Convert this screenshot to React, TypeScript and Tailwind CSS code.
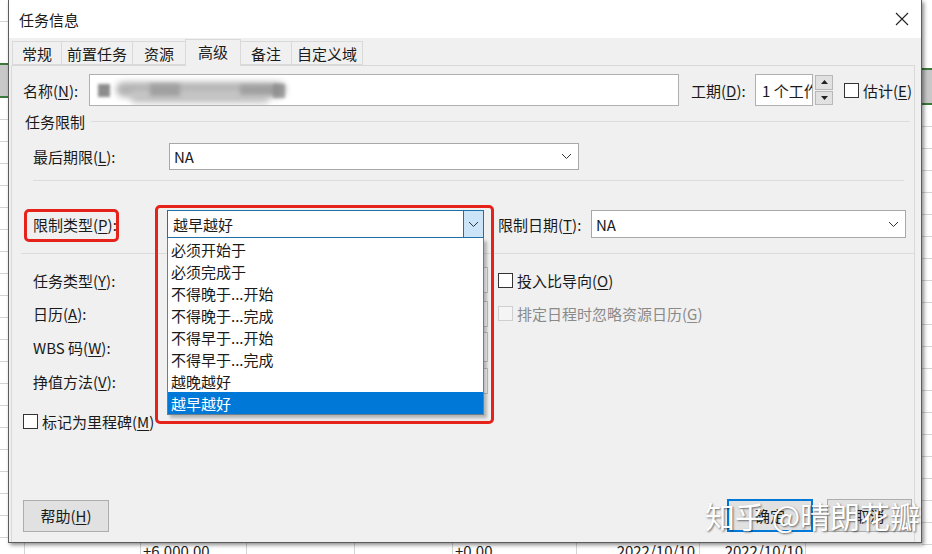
import React from "react";

const FONT = "font-['Microsoft_YaHei','Noto_Sans_CJK_SC','Noto_Sans',sans-serif]";

const TABS = [
  { label: "常规", w: "w-[50px]" },
  { label: "前置任务", w: "w-[72px]" },
  { label: "资源", w: "w-[54px]" },
  { label: "高级", w: "w-[56px]", active: true },
  { label: "备注", w: "w-[52px]" },
  { label: "自定义域", w: "w-[72px]" },
];

const OPTIONS = [
  "必须开始于",
  "必须完成于",
  "不得晚于...开始",
  "不得晚于...完成",
  "不得早于...开始",
  "不得早于...完成",
  "越晚越好",
  "越早越好",
];

function Key({ k }: { k: string }) {
  return <u className="underline underline-offset-[2px] decoration-[1px]">{k}</u>;
}

function Label({ text, k, after = "):" }: { text: string; k: string; after?: string }) {
  return (
    <span className="whitespace-nowrap">
      {text}(<Key k={k} />
      {after}
    </span>
  );
}

function Chevron() {
  return (
    <svg width="11" height="7" viewBox="0 0 11 7" fill="none">
      <path d="M1 1l4.5 4.5L10 1" stroke="#333" strokeWidth="1" />
    </svg>
  );
}

function Check({ disabled }: { disabled?: boolean }) {
  return (
    <div
      className={
        "w-[15px] h-[15px] shrink-0 " +
        (disabled ? "border border-[#cfcfcf] bg-[#f4f4f4]" : "border border-[#333] bg-white")
      }
    />
  );
}

function Select({ value, w }: { value?: string; w: string }) {
  return (
    <div className={`${w} h-[27px] bg-white border border-[#a8a8a8] flex items-center pl-[4px] pr-[6px]`}>
      <span className="flex-1 text-[15px] leading-none">{value}</span>
      <Chevron />
    </div>
  );
}

function Sheet() {
  return (
    <>
      {/* left strip of the sheet behind */}
      <div className="absolute left-0 top-0 w-[8px] h-full flex flex-col">
        <div className="h-[22px] border-b border-[#d4d4d4]" />
        <div className="h-[43px] border-b-2 border-[#3c7a3c]" />
        <div className="h-[33px] bg-[#c8c8c8] border-b-2 border-[#3c7a3c]" />
        {Array.from({ length: 20 }).map((_, i) => (
          <div key={i} className="h-[22px] border-b border-[#d4d4d4]" />
        ))}
      </div>
      {/* right strip */}
      <div className="absolute right-0 top-0 w-[10px] h-full flex flex-col">
        <div className="h-[70px] border-b-2 border-[#3c7a3c]" />
        <div className="h-[35px] bg-[#c8c8c8] border-b-2 border-[#3c7a3c]" />
        {Array.from({ length: 20 }).map((_, i) => (
          <div key={i} className="h-[22px] border-b border-[#d4d4d4]" />
        ))}
      </div>
      {/* bottom row, mostly hidden by the dialog */}
      <div className="absolute left-0 top-[541px] w-full h-[20px] flex text-[15px] leading-[20px] text-[#222]">
        <div className="w-[25px] border-r border-[#d4d4d4]" />
        <div className="w-[116px] border-r border-[#d4d4d4]" />
        <div className="w-[106px] border-r border-[#d4d4d4] pl-[2px]">+6,000.00</div>
        <div className="w-[108px] border-r border-[#d4d4d4]" />
        <div className="w-[98px] border-r border-[#d4d4d4]" />
        <div className="w-[124px] border-r border-[#d4d4d4] pl-[2px]">+0.00</div>
        <div className="w-[123px] border-r border-[#d4d4d4] text-right pr-[4px]">2022/10/10</div>
        <div className="w-[106px] border-r border-[#d4d4d4] text-right pr-[2px]">2022/10/10</div>
        <div className="flex-1" />
      </div>
    </>
  );
}

export default function App() {
  return (
    <div className={`relative w-[932px] h-[554px] bg-white overflow-hidden text-[#1a1a1a] ${FONT}`}>
      <Sheet />

      {/* Dialog window */}
      <div className="absolute left-[8px] top-0 w-[914px] h-[543px] flex flex-col bg-[#f0f0f0] border-x border-b border-[#5c5c5c] shadow-[2px_2px_4px_rgba(0,0,0,0.45)]">
        {/* Title bar */}
        <div className="h-[38px] bg-white flex items-center pl-[10px] pr-[12px]">
          <span className="flex-1 text-[15px] leading-none">任务信息</span>
          <svg width="14" height="14" viewBox="0 0 14 14">
            <path d="M1 1l12 12M13 1L1 13" stroke="#222" strokeWidth="1.1" />
          </svg>
        </div>

        {/* Tabs */}
        <div className="h-[27px] flex items-end pl-[3px] relative z-10">
          {TABS.map((t) =>
            t.active ? (
              <div
                key={t.label}
                className={`${t.w} h-[27px] -mb-px -ml-px bg-[#f0f0f0] border-x border-t border-[#d9d9d9] flex items-center justify-center text-[15px] leading-none pb-[3px]`}
              >
                {t.label}
              </div>
            ) : (
              <div
                key={t.label}
                className={`${t.w} h-[24px] bg-[#f0f0f0] border border-[#d9d9d9] -ml-px first:ml-0 flex items-center justify-center text-[15px] leading-none`}
              >
                {t.label}
              </div>
            )
          )}
        </div>

        {/* Panel */}
        <div className="flex-1 ml-[2px] mr-[6px] border-t border-x border-[#d9d9d9] flex flex-col text-[15px] leading-none pb-[10px]">
          {/* Name row */}
          <div className="mt-[8px] h-[32px] flex items-center pl-[11px]">
            <div className="w-[66px]">
              <Label text="名称" k="N" />
            </div>
            <div className="w-[590px] h-[32px] bg-white border border-[#b0b0b0] relative overflow-hidden">
              <div className="absolute left-[8px] top-[9px] w-[12px] h-[13px] bg-[#707070] blur-[1.5px] opacity-80" />
              <div className="absolute left-[26px] top-[7px] w-[170px] h-[15px] rounded-full bg-[#b4b4b4] blur-[3px]" />
              <div className="absolute left-[40px] top-[15px] w-[140px] h-[13px] rounded-full bg-[#c4c4c4] blur-[3px]" />
              <div className="absolute left-[60px] top-[9px] w-[30px] h-[12px] bg-[#a0a0a0] blur-[2px]" />
              <div className="absolute left-[150px] top-[10px] w-[40px] h-[10px] bg-[#9a9a9a] blur-[2px] opacity-80" />
              <div className="absolute left-[183px] top-[9px] w-[12px] h-[14px] bg-[#8a8a8a] blur-[1.5px] opacity-70" />
            </div>
            <div className="ml-[12px] w-[64px]">
              <Label text="工期" k="D" />
            </div>
            <div className="w-[58px] h-[32px] bg-white border border-[#b0b0b0] flex items-center pl-[6px] overflow-hidden whitespace-nowrap">
              1 个工作日
            </div>
            <div className="ml-[2px] w-[18px] h-[30px] flex flex-col gap-[1px]">
              <div className="flex-1 bg-[#e1e1e1] border border-[#b8b8b8] flex items-center justify-center">
                <svg width="7" height="4" viewBox="0 0 7 4">
                  <path d="M0 4L3.5 0L7 4z" fill="#222" />
                </svg>
              </div>
              <div className="flex-1 bg-[#e1e1e1] border border-[#b8b8b8] flex items-center justify-center">
                <svg width="7" height="4" viewBox="0 0 7 4">
                  <path d="M0 0L3.5 4L7 0z" fill="#222" />
                </svg>
              </div>
            </div>
            <div className="ml-[11px] flex items-center gap-[4px]">
              <Check />
              <Label text="估计" k="E" after=")" />
            </div>
          </div>

          {/* Section header */}
          <div className="mt-[6px] h-[18px] flex items-center pl-[13px]">
            <span>任务限制</span>
            <div className="flex-1 h-px bg-[#dcdcdc] ml-[6px] mr-[4px]" />
          </div>

          {/* Deadline */}
          <div className="mt-[13px] h-[27px] flex items-center pl-[21px]">
            <div className="w-[136px]">
              <Label text="最后期限" k="L" />
            </div>
            <Select value="NA" w="w-[410px]" />
          </div>

          <div className="mt-[10px] h-px bg-[#dcdcdc] ml-[21px] mr-[10px]" />

          {/* Constraint row */}
          <div className="mt-[29px] h-[28px] flex items-center pl-[21px]">
            <div className="w-[136px]">
              <Label text="限制类型" k="P" />
            </div>
            <div className="w-[317px] h-[28px]" />
            <div className="ml-[12px] w-[93px]">
              <Label text="限制日期" k="T" />
            </div>
            <div className="w-[315px] h-[28px] bg-white border border-[#a8a8a8] flex items-center pl-[4px] pr-[6px]">
              <span className="flex-1 text-[15px]">NA</span>
              <Chevron />
            </div>
          </div>

          <div className="mt-[15px] h-px bg-[#dcdcdc] ml-[9px]" />

          {/* Lower rows; their fields sit under the open list */}
          <div className="mt-[9px] flex flex-col pl-[21px]">
            <div className="h-[34px] flex items-center">
              <div className="w-[136px]">
                <Label text="任务类型" k="Y" />
              </div>
              <div className="w-[319px] h-[26px] bg-white border border-[#c4c4c4]" />
              <div className="ml-[10px] flex items-center gap-[4px]">
                <Check />
                <Label text="投入比导向" k="O" after=")" />
              </div>
            </div>
            <div className="h-[33px] flex items-center">
              <div className="w-[136px]">
                <Label text="日历" k="A" />
              </div>
              <div className="w-[319px] h-[26px] bg-white border border-[#c4c4c4]" />
              <div className="ml-[10px] flex items-center gap-[4px] text-[#8a8a8a]">
                <Check disabled />
                <Label text="排定日程时忽略资源日历" k="G" after=")" />
              </div>
            </div>
            <div className="h-[34px] flex items-center">
              <div className="w-[136px]">
                <Label text="WBS 码" k="W" />
              </div>
              <div className="w-[319px] h-[30px] bg-white border border-[#c4c4c4]" />
            </div>
            <div className="h-[34px] flex items-center">
              <div className="w-[136px]">
                <Label text="挣值方法" k="V" />
              </div>
              <div className="w-[319px] h-[26px] bg-white border border-[#c4c4c4]" />
            </div>
          </div>

          {/* Milestone */}
          <div className="mt-[11px] h-[24px] flex items-center pl-[11px] gap-[4px]">
            <Check />
            <Label text="标记为里程碑" k="M" after=")" />
          </div>

          {/* Buttons */}
          <div className="mt-auto flex items-center pl-[11px] pr-[2px]">
            <button className="w-[86px] h-[32px] bg-[#e1e1e1] border border-[#adadad] text-[15px]">
              <Label text="帮助" k="H" after=")" />
            </button>
            <div className="flex-1" />
            <button className="w-[86px] h-[33px] bg-[#e1e1e1] border-2 border-[#0078d7] text-[15px]">确定</button>
            <button className="ml-[14px] w-[85px] h-[33px] bg-[#e1e1e1] border border-[#adadad] text-[15px]">取消</button>
          </div>
        </div>
      </div>

      {/* Open combobox with its list */}
      <div className="absolute left-[167px] top-[210px] w-[317px] flex flex-col text-[15px] leading-none">
        <div className="h-[28px] bg-white border border-[#1f6fa8] flex items-center">
          <span className="flex-1 pl-[5px]">越早越好</span>
          <div className="w-[20px] h-full bg-[#cce4f7] border-l border-[#1f6fa8] flex items-center justify-center">
            <Chevron />
          </div>
        </div>
        <div className="bg-white border border-t-0 border-[#6e7f8c] shadow-[3px_3px_3px_rgba(0,0,0,0.25)] flex flex-col">
          {OPTIONS.map((o, i) => (
            <div
              key={o}
              className={
                "h-[22px] flex items-center pl-[3px] " +
                (i === OPTIONS.length - 1 ? "bg-[#0078d7] text-white" : "")
              }
            >
              {o}
            </div>
          ))}
        </div>
      </div>

      {/* Red annotation boxes */}
      <div className="absolute left-[24px] top-[209px] w-[95px] h-[33px] border-[3px] border-[#e5231b] rounded-[5px]" />
      <div className="absolute left-[155px] top-[205px] w-[339px] h-[219px] border-[3px] border-[#e5231b] rounded-[5px]" />

      {/* Watermark */}
      <div className="absolute left-[705px] top-[495px] text-[30px] leading-[40px] text-white whitespace-nowrap [text-shadow:1px_1px_2px_rgba(0,0,0,0.55)]">
        知乎 @晴朗花瓣
      </div>
    </div>
  );
}
